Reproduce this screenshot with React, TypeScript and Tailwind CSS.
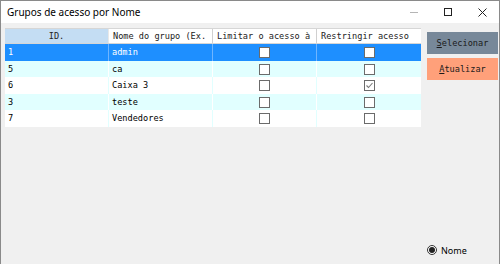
import { useState } from "react";

interface Grupo {
  id: string;
  nome: string;
  limitar: boolean;
  restringir: boolean;
}

const grupos: Grupo[] = [
  { id: "1", nome: "admin", limitar: false, restringir: false },
  { id: "5", nome: "ca", limitar: false, restringir: false },
  { id: "6", nome: "Caixa 3", limitar: false, restringir: true },
  { id: "3", nome: "teste", limitar: false, restringir: false },
  { id: "7", nome: "Vendedores", limitar: false, restringir: false },
];

const mono = "font-['DejaVu_Sans_Mono','Liberation_Mono',monospace] text-[8.6px]";

const Check = ({ checked }: { checked: boolean }) => (
  <div className="w-[11px] h-[11px] border border-[#6b6b6b] bg-white flex items-center justify-center">
    {checked && (
      <svg width="9" height="9" viewBox="0 0 9 9">
        <path d="M1.5 4.5 L3.5 6.5 L7.5 2" stroke="#7a7a7a" strokeWidth="1.1" fill="none" />
      </svg>
    )}
  </div>
);

export default function App() {
  const [selected, setSelected] = useState(0);
  const [ordem, setOrdem] = useState(true);

  return (
    <div className="w-[500px] h-[264px] overflow-hidden flex flex-col border-l border-t border-r border-[#8a8a8a] bg-[#f0f0f0] font-['Noto_Sans',sans-serif]">
      {/* barra de título */}
      <div className="h-[22px] shrink-0 bg-white flex items-center">
        <span className="pl-[6px] text-[10px] text-black">Grupos de acesso por Nome</span>
        <div className="ml-auto flex items-center h-full">
          <div className="w-[34px] h-full flex items-center justify-center">
            <div className="w-[8px] h-px bg-[#b5b5b5]" />
          </div>
          <div className="w-[34px] h-full flex items-center justify-center">
            <div className="w-[8px] h-[8px] border border-[#222]" />
          </div>
          <div className="w-[34px] h-full flex items-center justify-center">
            <svg width="9" height="9" viewBox="0 0 9 9">
              <path d="M0.5 0.5 L8.5 8.5 M8.5 0.5 L0.5 8.5" stroke="#222" strokeWidth="1" />
            </svg>
          </div>
        </div>
      </div>

      <div className="flex-1 flex pl-[4px] pt-[5px] pr-[1px]">
        {/* grade */}
        <div className="w-[417px] flex flex-col">
          <div className={`h-[16px] flex border-t border-b border-[#d6d6d6] bg-white text-[#222] ${mono}`}>
            <div className="w-[104px] bg-[#c4ddf3] flex items-center justify-center border-r border-[#e8e8e8]">ID.</div>
            <div className="w-[104px] flex items-center pl-[4px] border-r border-[#d0d0d0] whitespace-nowrap overflow-hidden">Nome do grupo (Ex.</div>
            <div className="w-[104px] flex items-center pl-[4px] border-r border-[#d0d0d0] whitespace-nowrap overflow-hidden">Limitar o acesso à</div>
            <div className="w-[104px] flex items-center pl-[4px] whitespace-nowrap overflow-hidden">Restringir acesso</div>
          </div>
          {grupos.map((g, i) => {
            const sel = i === selected;
            const cyan = i % 2 === 1;
            const bg = sel ? "bg-[#1e8fff] text-white" : cyan ? "bg-[#e1ffff] text-black" : "bg-white text-black";
            const line = sel ? "border-[#6fb5ff]" : cyan ? "border-white" : "border-[#e1ffff]";
            const h = i % 2 === 0 ? "h-[17px]" : "h-[16px]";
            return (
              <div key={g.id} onClick={() => setSelected(i)} className={`${h} flex ${bg} ${mono}`}>
                <div className={`w-[104px] flex items-center pl-[3px] border-r ${line}`}>{g.id}</div>
                <div className={`w-[104px] flex items-center pl-[3px] border-r ${line}`}>{g.nome}</div>
                <div className={`w-[104px] flex items-center justify-center border-r ${line}`}>
                  <Check checked={g.limitar} />
                </div>
                <div className="w-[104px] flex items-center justify-center">
                  <Check checked={g.restringir} />
                </div>
              </div>
            );
          })}
        </div>

        {/* botões e opções */}
        <div className="flex-1 flex flex-col pl-[6px] pt-[4px] pb-[7px]">
          <button className={`h-[22px] w-[71px] bg-[#778899] text-[#1a1a1a] ${mono} text-[8.6px]`}>
            <span className="underline">S</span>elecionar
          </button>
          <button className={`mt-[4px] h-[22px] w-[71px] bg-[#ffa07a] text-[#1a1a1a] ${mono} text-[8.6px]`}>
            <span className="underline">A</span>tualizar
          </button>
          <label className="mt-auto flex items-center gap-[4px] text-[9px] text-black cursor-pointer" onClick={() => setOrdem(true)}>
            <span className="w-[10px] h-[10px] rounded-full border border-[#333] bg-white flex items-center justify-center">
              {ordem && <span className="w-[6px] h-[6px] rounded-full bg-[#222]" />}
            </span>
            Nome
          </label>
        </div>
      </div>
    </div>
  );
}
